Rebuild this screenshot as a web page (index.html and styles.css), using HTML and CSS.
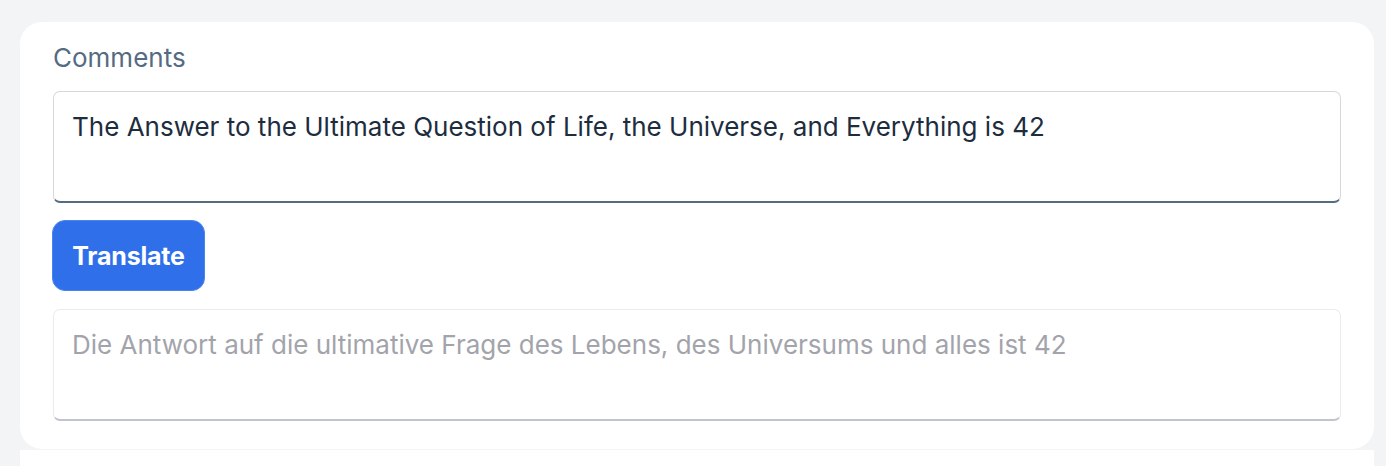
FILE: index.html
```html
<!DOCTYPE html>
<html>
<head>
<meta charset="utf-8">
<link rel="stylesheet" href="styles.css">
</head>
<body>
<div class="page">
  <div class="card">
    <label class="label">Comments</label>
    <div class="field input">The Answer to the Ultimate Question of Life, the Universe, and Everything is 42</div>
    <div class="actions"><button class="btn">Translate</button></div>
    <div class="field output">Die Antwort auf die ultimative Frage des Lebens, des Universums und alles ist 42</div>
  </div>
  <div class="below"></div>
</div>
</body>
</html>
```
FILE: styles.css
```css
html, body {
  margin: 0;
  padding: 0;
  background: #f3f4f6;
  font-family: "Inter", "Noto Sans", sans-serif;
}
.page {
  padding: 22px 12px 0 20px;
}
.card {
  background: #ffffff;
  border-radius: 22px;
  padding: 18px 33px 28px 33px;
  display: flex;
  flex-direction: column;
}
.label {
  font-size: 26px;
  line-height: 36px;
  color: #556b82;
  margin-bottom: 15px;
}
.field {
  box-sizing: border-box;
  height: 112px;
  border-radius: 7px;
  padding: 18px 18px;
  font-size: 26px;
  line-height: 34px;
}
.input {
  border: 1px solid #d5d9de;
  border-bottom: 2px solid #556b82;
  color: #1d2d3e;
}
.actions {
  display: flex;
  margin: 17px 0 18px -1px;
}
.btn {
  font-family: inherit;
  font-size: 25px;
  font-weight: 700;
  color: #ffffff;
  background: #2f70ea;
  border: 1px solid #4c82ec;
  border-radius: 13px;
  width: 153px;
  height: 71px;
  padding: 0;
  letter-spacing: -0.2px;
}
.output {
  border: 1px solid #ebebeb;
  border-bottom: 2px solid #c0c4cf;
  color: #a3a4ab;
}
.below {
  height: 16px;
  background: #ffffff;
  margin-top: 1px;
}
```
